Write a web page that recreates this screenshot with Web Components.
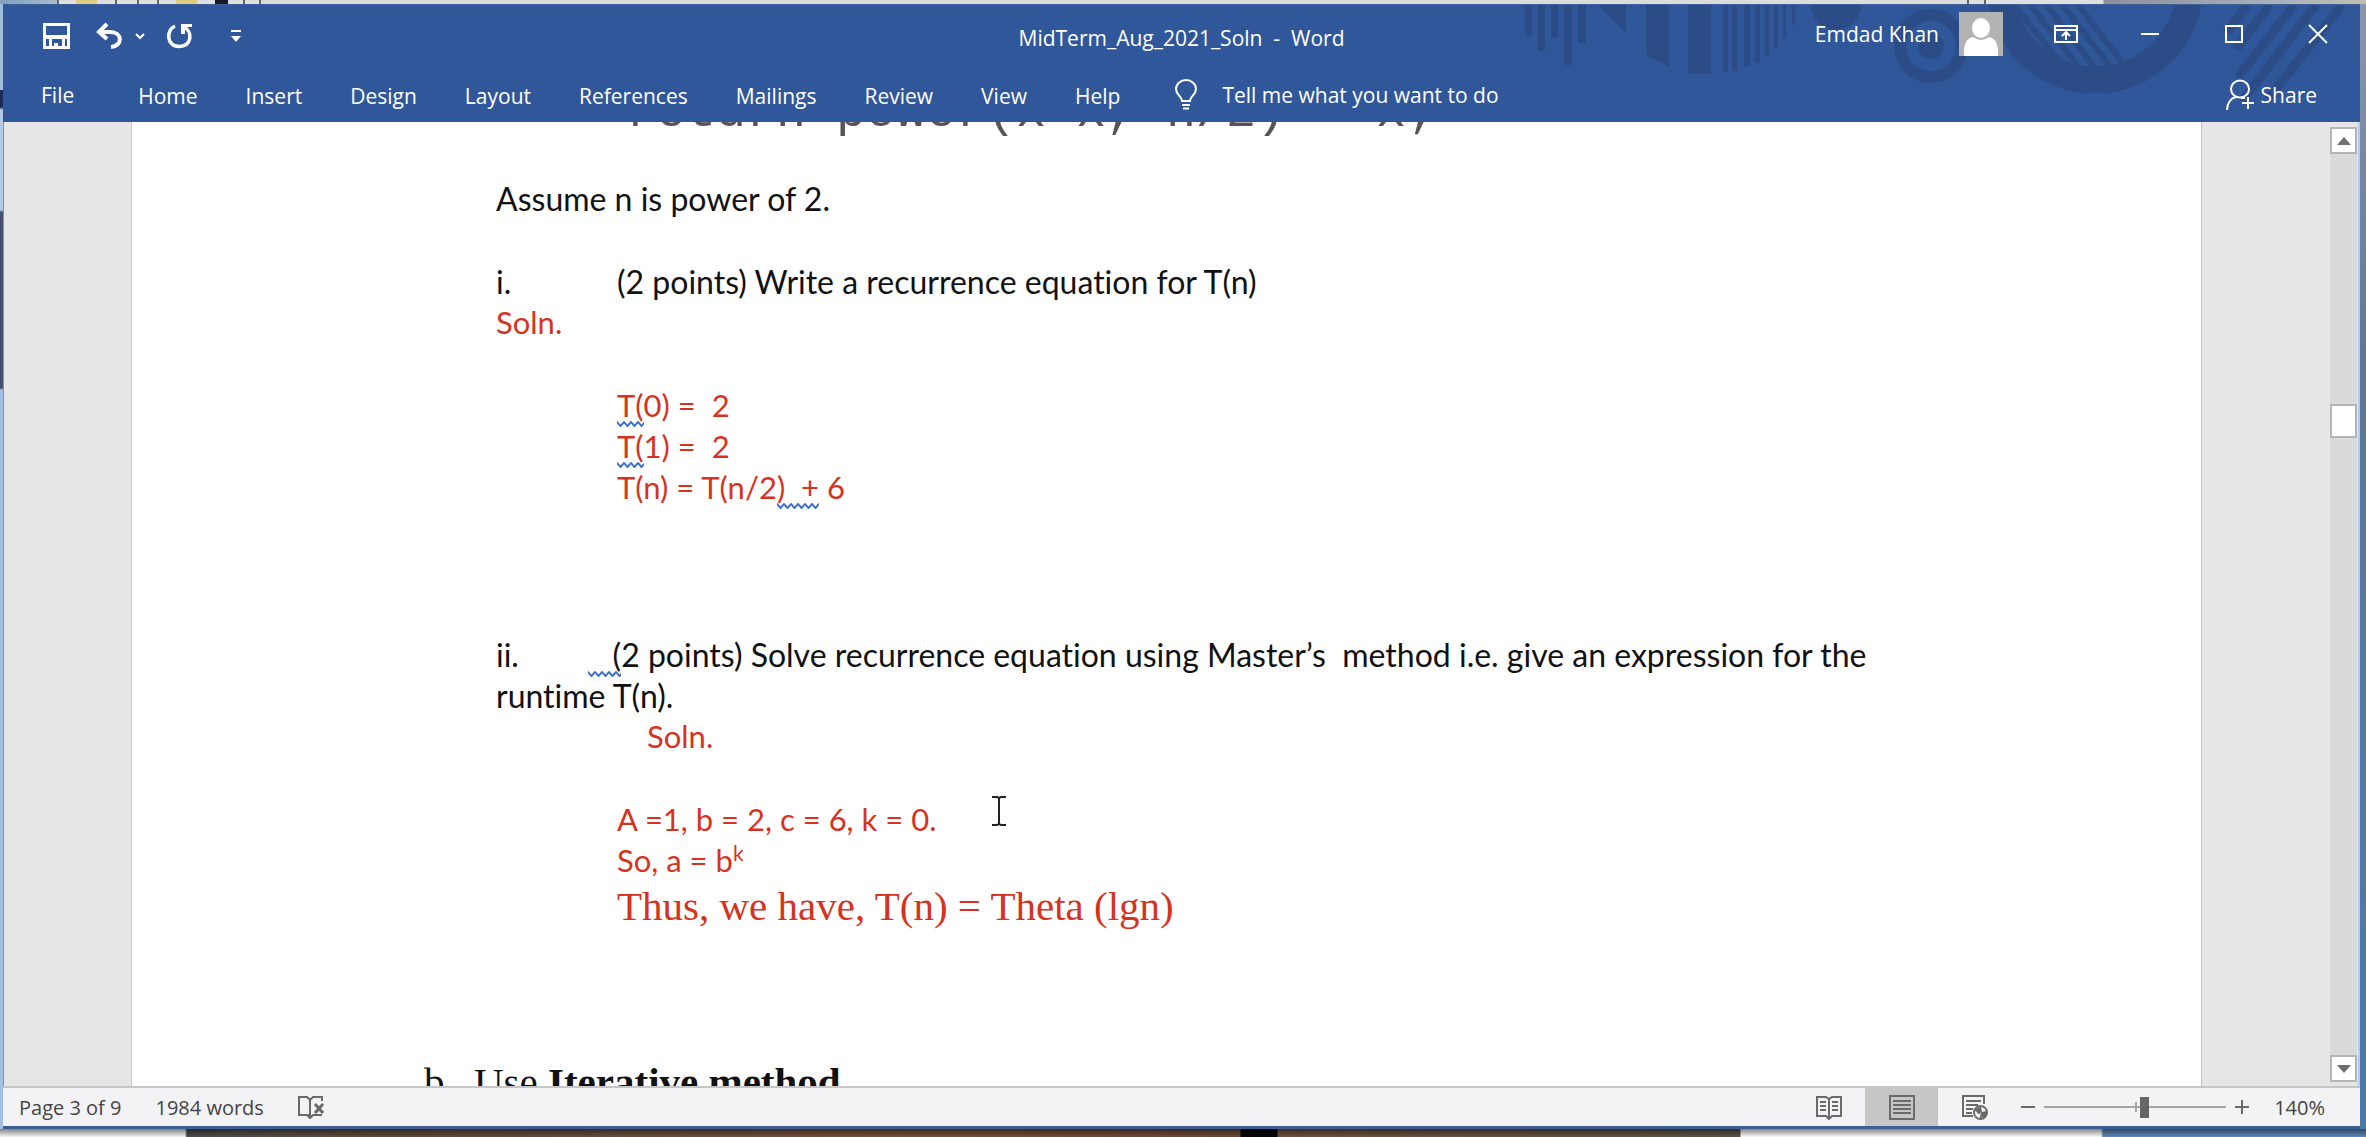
<!DOCTYPE html>
<html lang="en">
<head>
<meta charset="utf-8">
<title>MidTerm_Aug_2021_Soln - Word</title>
<style>
html,body{margin:0;height:100%}
body{overflow:hidden;font-family:"Open Sans","Noto Sans",sans-serif;font-size:21px;color:#fff}
</style>
</head>
<body>
<desk-top>
  <word-window>
    <title-bar slot="title" user="Emdad Khan">MidTerm_Aug_2021_Soln&nbsp; -&nbsp; Word</title-bar>
    <doc-view slot="body">
      <doc-line kind="code">return power(x*x, n/2) * x;</doc-line>
      <doc-line>Assume n is power of 2.</doc-line>
      <doc-gap></doc-gap>
      <doc-line label="i.">(2 points) Write a recurrence equation for T(n)</doc-line>
      <doc-line tone="red">Soln.</doc-line>
      <doc-gap></doc-gap>
      <doc-line tone="red" indent="1"><wavy-text>T(</wavy-text>0) =&nbsp; 2</doc-line>
      <doc-line tone="red" indent="1"><wavy-text>T(</wavy-text>1) =&nbsp; 2</doc-line>
      <doc-line tone="red" indent="1">T(n) = T(n/2<wavy-text>)&nbsp; +</wavy-text> 6</doc-line>
      <doc-gap></doc-gap><doc-gap></doc-gap><doc-gap></doc-gap>
      <doc-line label="ii." short><wavy-text>&nbsp;&nbsp; (</wavy-text>2 points) Solve recurrence equation using Master’s&nbsp; method i.e. give an expression for the</doc-line>
      <doc-line>runtime T(n).</doc-line>
      <doc-line tone="red" indent="2">Soln.</doc-line>
      <doc-gap></doc-gap>
      <doc-line tone="red" indent="1">A =1, b = 2, c = 6, k = 0.</doc-line>
      <doc-line tone="red" indent="1">So, a = b<sup-text>k</sup-text></doc-line>
      <doc-line tone="red" indent="1" kind="serif">Thus, we have, T(n) = Theta (lgn)</doc-line>
      <doc-gap></doc-gap><doc-gap></doc-gap><doc-gap></doc-gap>
      <doc-line label="b." kind="list">Use <b>Iterative method</b></doc-line>
    </doc-view>
    <status-bar slot="status"></status-bar>
  </word-window>
</desk-top>
<script>
function define(name, html, setup){
  const t = document.createElement('template');
  t.innerHTML = html;
  customElements.define(name, class extends HTMLElement{
    connectedCallback(){
      if(this.shadowRoot) return;
      this.attachShadow({mode:'open'}).appendChild(t.content.cloneNode(true));
      if(setup) setup(this, this.shadowRoot);
    }
  });
}

define('desk-top', `
<style>
:host{display:flex;flex-direction:column;box-sizing:border-box;height:100vh;padding:4px 6px 8px 3px;
 background:
  linear-gradient(#0007,#0000) bottom/100% 8px no-repeat,
  linear-gradient(90deg,#f2f4f6 0 185px,#4b4d50 187px,#5a4a3e 320px,#77523a 900px,#6b4a36 1240px,#050505 1241px 1277px,#70503c 1278px,#5c5446 1740px,#fafafa 1741px 2101px,#5d88b8 2103px) bottom/100% 8px no-repeat,
  linear-gradient(90deg,#7fa0be,#a9bccd 57px,#666 57px 59px,#dfe0e2 59px 76px,#e0cc80 76px 97px,#dfe0e2 97px 115px,#666 115px 117px,#dfe0e2 117px 137px,#666 137px 139px,#dfe0e2 139px 157px,#666 157px 159px,#dfe0e2 159px 176px,#e0cc80 176px 197px,#dfe0e2 197px 215px,#15182a 215px 228px,#dfe0e2 228px 243px,#666 243px 245px,#dfe0e2 245px 259px,#666 259px 261px,#dcdcdc 261px 1967px,#666 1967px 1969px,#dfe0e2 1969px 1984px,#666 1984px 1986px,#dfe0e2 1986px 2103px,#8c9099 2104px,#a9b2bd 2280px,#c0bfae) top/100% 4px no-repeat,
  linear-gradient(#9fc0dc 0 90px,#1b2c5c 90px 107px,#b4cbe8 110px 210px,#44506e 212px 388px,#a4bfe4 390px) left/3px 100% no-repeat,
  linear-gradient(#8b97ab,#5f7896 350px,#4c79ad)}
::slotted(*){flex:1;min-height:0}
</style><slot></slot>`);

define('word-window', `
<style>
:host{display:flex;flex-direction:column;background:#e6e6e6;border:solid #3d5f96;border-width:1px 0 3px;overflow:hidden}
.body{flex:1;min-height:0;display:flex;border:solid #b4cdf5;border-width:0 2px 0 0;border-left:1px solid #8f8f92}
slot[name=body]::slotted(*){flex:1}
</style>
<slot name="title"></slot><div class="body"><slot name="body"></slot><scroll-bar></scroll-bar></div><slot name="status"></slot>`);

define('title-bar', `
<style>
:host{display:block;position:relative;background:#31579b;color:#fff}
.art{position:absolute;right:0;top:0;width:860px;height:117px}
button{font:inherit;color:inherit;background:none;border:0;padding:0;display:flex;align-items:center;justify-content:center}
svg{display:block;fill:none;stroke:#fff;stroke-width:2;overflow:visible}
.row{position:relative;display:grid;grid-template-columns:1fr auto 1fr;height:62px;align-items:center}
.row>div:nth-child(2){padding-top:4px}
.quick{display:flex;align-items:center;padding-left:40px}
.quick button:nth-child(2){margin-left:26px}
.quick button:nth-child(3){margin-left:13px}
.quick button:nth-child(4){margin-left:22px}
.quick button:nth-child(5){margin-left:38px}
.right{display:flex;align-items:center;justify-content:flex-end}
.right button{width:84px;height:58px}
.right{padding-bottom:4px}
.avatar{margin:0 21px 0 20px}
nav{position:relative;display:flex;align-items:center;height:55px;padding:0 43px 0 38px}
nav .tabs{display:flex;gap:48px;padding-top:2px}
nav .file{margin-right:64px}
.tell{gap:25px;margin-left:55px}
.share{gap:7px;margin-left:auto}
</style>
<svg class="art" viewBox="0 0 860 117" aria-hidden="true">
 <g fill="#2b4c86" stroke="none">
 <path d="M25 0h7v31h-7zM38 0h7v46h-7zM51 0h7v33h-7zM64 0h8v60h-8zM78 0h8v38h-8zM98 0h28v28zM146 0h23v62l-23-12zM188 0h23v69h-23zM223 0h5v67h-5zM232 0h5v66h-5zM244 0h6v61h-6zM255 0h5v58h-5zM265 0h4v51h-4zM274 0h4v44h-4zM283 0h3v33h-3zM292 0h3v20h-3z"/>
 <path d="M311 0a25 25 0 0 0 50 0z"/><circle cx="431" cy="41" r="13"/></g>
 <g fill="none" stroke="#2b4c86">
 <circle cx="431" cy="41" r="31" stroke-width="12"/>
 <path d="M500 -20A95 95 0 1 0 690 -20" stroke-width="27"/>
 <path d="M514 0l66 82M530 0l66 84M546 0l64 82M562 0l60 76M578 0l54 70" stroke-width="6"/>
 <path d="M748 0l-22 28M770 0l-34 44M794 0l-56 72M816 0l-74 96M842 0l-74 94" stroke-width="9"/></g>
</svg>
<div class="row">
 <div class="quick">
  <button aria-label="Save"><svg width="27" height="26"><path d="M1.500 1.500h24v23h-24z" stroke-width="3"/><path d="M2 12h23v4h-23zM6 16h3v9h-3zM19 16h3v9h-3zM11 20h4v5h-4z" fill="#fff" stroke="none"/></svg></button>
  <button aria-label="Undo"><svg width="26" height="24"><path d="M3 8H14C27 8 27 22 15 23" stroke-width="4"/><path d="M11 0L3 8l8 7" stroke-width="4"/></svg></button>
  <button aria-label="Undo list"><svg width="10" height="6"><path d="M1 1l4 4 4-4"/></svg></button>
  <button aria-label="Repeat"><svg width="26" height="24"><path d="M8 2C-1 6-1 22 12 22.500C25 22 26 8 17 3" stroke-width="3.500"/><path d="M14 0h11v3h-7v7h-4z" fill="#fff" stroke="none"/></svg></button>
  <button aria-label="Customize Quick Access Toolbar"><svg width="10" height="12"><path d="M0 1h10"/><path d="M0 6h10l-5 6z" fill="#fff" stroke="none"/></svg></button>
 </div>
 <div><slot></slot></div>
 <div class="right">
  <span class="user"></span>
  <svg class="avatar" width="44" height="44" viewBox="0 0 44 44"><path d="M0 0h44v44H0z" fill="#b3b3b3" stroke="none"/><g fill="#fff" stroke="none"><ellipse cx="22" cy="16" rx="9" ry="10"/><path d="M5 44V38Q6 26 14 25Q22 31 30 25Q38 26 39 38V44z"/></g></svg>
  <button aria-label="Ribbon Display Options"><svg width="24" height="18"><path d="M1 1h22v16H1zM1 5h22M12 15V8M8 11l4-4 4 4"/></svg></button>
  <button aria-label="Minimize"><svg width="18" height="2"><path d="M0 1h18"/></svg></button>
  <button aria-label="Maximize"><svg width="18" height="18"><path d="M1 1h16v16H1z"/></svg></button>
  <button aria-label="Close"><svg width="18" height="18"><path d="M0 0l18 18M18 0L0 18"/></svg></button>
 </div>
</div>
<nav>
 <button class="file">File</button>
 <div class="tabs"><button>Home</button><button>Insert</button><button>Design</button><button>Layout</button><button>References</button><button>Mailings</button><button>Review</button><button>View</button><button>Help</button></div>
 <button class="tell"><svg width="22" height="29"><path d="M7 21C7 16 1 15 1 9A10 9 0 0 1 21 9C21 15 15 16 15 21zM7 25h8M8 28.500h6"/></svg>Tell me what you want to do</button>
 <button class="share"><svg width="28" height="30"><ellipse cx="14" cy="9" rx="9" ry="8.500"/><path d="M1 30C1 23 5 18 10 17M15 18h4M22 17v12M16 23h12"/></svg>Share</button>
</nav>`, (h,r)=>{ r.querySelector('.user').textContent = h.getAttribute('user'); });

define('doc-view', `
<style>
:host{display:flex;min-width:0;overflow:hidden;padding:0 128px 0 127px;color:#111;font-family:Lato,sans-serif;font-size:32px;line-height:41px;font-variant-ligatures:none}
.page{flex:1;position:relative;background:#fff;border:solid #c6c6c6;border-width:0 1px;padding-left:364px;white-space:pre;overflow:hidden}
.beam{position:absolute;left:860px;top:674px}
</style>
<div class="page"><slot></slot><svg class="beam" width="14" height="30" fill="none" stroke="#222" stroke-width="2"><path d="M0 1h5l2 1 2-1h5M7 2v26M0 29h5l2-1 2 1h5"/></svg></div>`,
(h,r)=>{ for(const n of [...h.childNodes]) if(n.nodeType===3) n.remove(); });

define('doc-line', `
<style>
:host{display:flex}
:host([tone=red]){color:#d5331f;font-size:31px}
:host([indent="1"]){padding-left:121px}
:host([indent="2"]){padding-left:151px}
:host([kind=code]){font-family:"Liberation Mono",monospace;font-size:50px;line-height:50px;color:#555;margin:-34px 0 40px 130px}
:host([kind=serif]){font-family:"Liberation Serif",serif;font-size:41px;line-height:50px}
:host([kind=list]){font-family:"Liberation Serif",serif;font-size:41px;line-height:50px;margin-left:-72px}
.label{width:121px}
:host([short]) .label{width:92px}
:host([kind=list]) .label{width:50px}
.label:empty{display:none}
</style><span class="label"></span><span><slot></slot></span>`,
(h,r)=>{ r.querySelector('.label').textContent = h.getAttribute('label') || ''; });

define('doc-gap', `<style>:host{display:block;height:42px}</style>`);
define('wavy-text', `<style>:host{display:inline;padding-bottom:3px;background:url("data:image/svg+xml,%3Csvg xmlns='http://www.w3.org/2000/svg' width='7' height='6'%3E%3Cpath d='M-1 0L3.5 5L8 0' fill='none' stroke='%233f6fd0' stroke-width='2'/%3E%3C/svg%3E") left bottom/7px 6px repeat-x}</style><slot></slot>`);
define('sup-text', `<style>:host{display:inline;font-size:21px;line-height:1px;vertical-align:super}</style><slot></slot>`);

define('scroll-bar', `
<style>
:host{display:flex;flex-direction:column;width:27px;margin:5px 1px 4px 0;background:#dadada}
button,.thumb{box-sizing:border-box;width:27px;height:27px;padding:0;background:#fff;border:2px solid #b5b5b5;display:flex;align-items:center;justify-content:center}
.track{flex:1;display:flex;flex-direction:column}
.before{flex:250}.after{flex:618}
.thumb{height:34px}
</style>
<button aria-label="Scroll up"><svg width="14" height="8"><path d="M0 8l7-8 7 8z" fill="#707070"/></svg></button>
<div class="track"><div class="before"></div><div class="thumb"></div><div class="after"></div></div>
<button aria-label="Scroll down"><svg width="14" height="8"><path d="M0 0l7 8 7-8z" fill="#707070"/></svg></button>`);

define('status-bar', `
<style>
:host{display:flex;align-items:stretch;height:40px;box-sizing:border-box;background:#f3f3f5;border:solid #c6c6c6;border-width:2px 0 0;color:#444;font-size:20px;padding:0 35px 0 16px}
button{font:inherit;color:inherit;background:none;border:0;padding:0;display:flex;align-items:center;justify-content:center}
svg{display:block;fill:none;stroke:#6a6a6a;stroke-width:2}
.left{display:flex;gap:34px;flex:1}
.views{display:flex}
.views button{width:73px}
.views .on{background:#c6c6c6}
.zoom{display:flex;align-items:center}
.minus{margin-left:10px}
.slider{display:grid;align-items:center;width:182px;margin:0 9px}
.slider>*{grid-area:1/1}
.rail{stroke:#a5a5a5}
input{appearance:none;-webkit-appearance:none;width:182px;height:22px;margin:0;background:none}
input::-webkit-slider-thumb{-webkit-appearance:none;width:9px;height:21px;background:#666;border:0}
.pct{margin-left:25px}
</style>
<div class="left"><button>Page 3 of 9</button><button>1984 words</button>
 <button aria-label="Proofing errors"><svg width="28" height="24"><path d="M12 20H1V2h8l3 3 3-3h9v4M12 5v17M9 20l3 3 3-3h9"/><path d="M17 9l8 9M25 9l-8 9" stroke-width="3"/></svg></button></div>
<div class="views">
 <button aria-label="Read Mode"><svg width="26" height="25"><path d="M13 4L10 2H1v19h9l3 3 3-3h9V2h-9zM13 4v20M4 7h6M4 11h6M4 15h6M16 7h6M16 11h6M16 15h6"/></svg></button>
 <button class="on" aria-label="Print Layout"><svg width="26" height="25"><path d="M1 1h24v23H1zM4 6h18M4 10h18M4 14h18M4 18h18"/></svg></button>
 <button aria-label="Web Layout"><svg width="26" height="25"><path d="M11 21H1V1h21v8M4 6h15M4 10h12M4 14h7M4 18h6"/><circle cx="18.500" cy="17.500" r="6.500" fill="#f3f3f5"/><path d="M14 15l4-2 1 3-2 2zM19 22l1-4 4-1-1 4z" fill="#6a6a6a"/></svg></button>
</div>
<div class="zoom">
 <button class="minus" aria-label="Zoom out"><svg width="14" height="14"><path d="M0 7h14"/></svg></button>
 <label class="slider"><svg class="rail" width="182" height="12"><path d="M0 6h182M92 1v10"/></svg><input type="range" min="0" max="182" value="101" aria-label="Zoom" aria-valuetext="140%"></label>
 <button aria-label="Zoom in"><svg width="14" height="14"><path d="M0 7h14M7 0v14"/></svg></button>
 <button class="pct">140%</button>
</div>`);
</script>
</body>
</html>
